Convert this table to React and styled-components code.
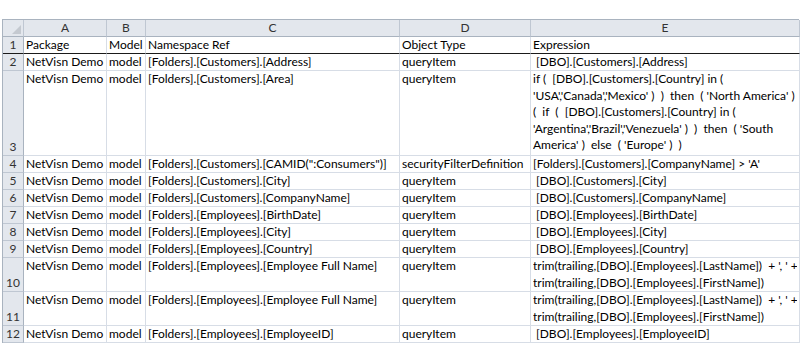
import styled, { createGlobalStyle } from "styled-components";

const GlobalStyle = createGlobalStyle`
  html, body {
    margin: 0;
    padding: 0;
    background: #fff;
  }
  body {
    font-family: Lato, "Open Sans", "Liberation Sans", sans-serif;
    font-size: 12px;
    color: #000;
  }
`;

const columns = ["A", "B", "C", "D", "E"];

const rows = [
  { n: 1, h: 1, cells: ["Package", "Model", "Namespace Ref", "Object Type", ["Expression"]] },
  { n: 2, h: 1, cells: ["NetVisn Demo", "model", "[Folders].[Customers].[Address]", "queryItem", [" [DBO].[Customers].[Address]"]] },
  {
    n: 3,
    h: 5,
    cells: [
      "NetVisn Demo",
      "model",
      "[Folders].[Customers].[Area]",
      "queryItem",
      [
        "if (  [DBO].[Customers].[Country] in (",
        "'USA','Canada','Mexico' )  )  then  ( 'North America' )",
        "(  if  (  [DBO].[Customers].[Country] in (",
        "'Argentina','Brazil','Venezuela' )  )  then  ( 'South",
        "America' )  else  ( 'Europe' )  )",
      ],
    ],
  },
  { n: 4, h: 1, cells: ["NetVisn Demo", "model", '[Folders].[Customers].[CAMID(":Consumers")]', "securityFilterDefinition", ["[Folders].[Customers].[CompanyName] > 'A'"]] },
  { n: 5, h: 1, cells: ["NetVisn Demo", "model", "[Folders].[Customers].[City]", "queryItem", [" [DBO].[Customers].[City]"]] },
  { n: 6, h: 1, cells: ["NetVisn Demo", "model", "[Folders].[Customers].[CompanyName]", "queryItem", [" [DBO].[Customers].[CompanyName]"]] },
  { n: 7, h: 1, cells: ["NetVisn Demo", "model", "[Folders].[Employees].[BirthDate]", "queryItem", [" [DBO].[Employees].[BirthDate]"]] },
  { n: 8, h: 1, cells: ["NetVisn Demo", "model", "[Folders].[Employees].[City]", "queryItem", [" [DBO].[Employees].[City]"]] },
  { n: 9, h: 1, cells: ["NetVisn Demo", "model", "[Folders].[Employees].[Country]", "queryItem", [" [DBO].[Employees].[Country]"]] },
  {
    n: 10,
    h: 2,
    cells: ["NetVisn Demo", "model", "[Folders].[Employees].[Employee Full Name]", "queryItem", ["trim(trailing,[DBO].[Employees].[LastName])  + ', ' +", "trim(trailing,[DBO].[Employees].[FirstName])"]],
  },
  {
    n: 11,
    h: 2,
    cells: ["NetVisn Demo", "model", "[Folders].[Employees].[Employee Full Name]", "queryItem", ["trim(trailing,[DBO].[Employees].[LastName])  + ', ' +", "trim(trailing,[DBO].[Employees].[FirstName])"]],
  },
  { n: 12, h: 1, cells: ["NetVisn Demo", "model", "[Folders].[Employees].[EmployeeID]", "queryItem", [" [DBO].[Employees].[EmployeeID]"]] },
];

const Page = styled.div`
  padding: 19px 1px 0 2px;
`;

const Sheet = styled.div`
  display: grid;
  grid-template-columns: 21px 83px 39px 254px 131px 269px;
  border-top: 1px solid #a9b3bf;
  border-left: 1px solid #a9b3bf;
  width: 797px;
  box-sizing: border-box;
`;

const HeadCell = styled.div`
  height: 16px;
  background: #e3e7ed;
  border-right: 1px solid #bfc7d2;
  border-bottom: 1px solid #a9b3bf;
  color: #333;
  font-size: 12px;
  line-height: 16px;
  text-align: center;
`;

const Corner = styled(HeadCell)`
  position: relative;
  &::after {
    content: "";
    position: absolute;
    right: 2px;
    bottom: 2px;
    border-style: solid;
    border-width: 0 0 9px 9px;
    border-color: transparent transparent #c4c9d0 transparent;
  }
`;

const RowHead = styled.div`
  height: ${(p) => p.$h}px;
  background: #e3e7ed;
  border-right: 1px solid #a9b3bf;
  border-bottom: 1px solid ${(p) => (p.$frozen ? "#1a1a1a" : "#bfc7d2")};
  color: #333;
  display: flex;
  align-items: flex-end;
  justify-content: center;
  line-height: 16px;
  box-sizing: border-box;
`;

const Cell = styled.div`
  height: ${(p) => p.$h}px;
  border-right: 1px solid #d7dde6;
  border-bottom: 1px solid ${(p) => (p.$frozen ? "#1a1a1a" : "#d7dde6")};
  padding: 0 2px;
  box-sizing: border-box;
  overflow: hidden;
  white-space: pre;
  line-height: 16.6px;
`;

const Line = styled.div`
  white-space: pre;
  overflow: hidden;
`;

export default function App() {
  return (
    <>
      <GlobalStyle />
      <Page>
        <Sheet>
          <Corner />
          {columns.map((c) => (
            <HeadCell key={c}>{c}</HeadCell>
          ))}
          {rows.map((r) => {
            const h = r.h === 1 ? 17 : r.h === 2 ? 34 : 85;
            const frozen = r.n === 1;
            return [
              <RowHead key={`h${r.n}`} $h={h} $frozen={frozen}>
                {r.n}
              </RowHead>,
              ...r.cells.map((c, i) => (
                <Cell key={`${r.n}-${i}`} $h={h} $frozen={frozen}>
                  {Array.isArray(c) ? c.map((l, j) => <Line key={j}>{l}</Line>) : c}
                </Cell>
              )),
            ];
          })}
        </Sheet>
      </Page>
    </>
  );
}
